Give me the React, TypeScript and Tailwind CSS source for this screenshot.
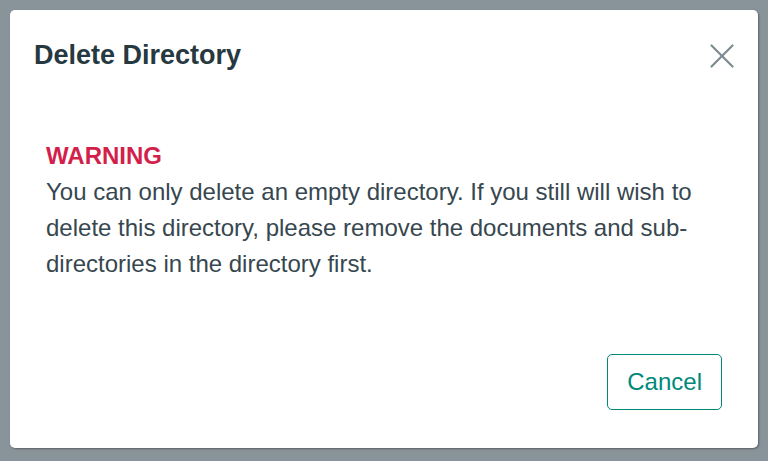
import React from 'react';

const CloseIcon: React.FC = () => (
  <svg width="24" height="24" viewBox="0 0 24 24" fill="none" stroke="#7b8a8f" strokeWidth="2.2" strokeLinecap="round">
    <line x1="1.5" y1="1.5" x2="22.5" y2="22.5" />
    <line x1="22.5" y1="1.5" x2="1.5" y2="22.5" />
  </svg>
);

export default function App() {
  return (
    <div className="h-[461px] w-full bg-[#89949a] p-[10px] font-['Liberation_Sans',Arial,sans-serif]">
      <div className="flex h-[438px] flex-col rounded-[5px] bg-white shadow-[1px_1px_2px_rgba(0,0,0,0.35)]">
        <header className="flex items-center justify-between px-[24px] pt-[30px]">
          <h2 className="text-[27px] font-bold leading-[31px] text-[#263840]">Delete Directory</h2>
          <button type="button" aria-label="Close" className="flex h-6 w-6 items-center justify-center">
            <CloseIcon />
          </button>
        </header>

        <div className="mt-[67px] px-[36px] text-[24px] leading-[36px] text-[#37474f]">
          <p className="font-bold text-[#d31f4b]">WARNING</p>
          <p>
            You can only delete an empty directory. If you still will wish to delete this directory, please remove
            the documents and sub-directories in the directory first.
          </p>
        </div>

        <footer className="mt-auto flex justify-end px-[36px] pb-[38px]">
          <button
            type="button"
            className="rounded-[5px] border border-[#00897b] px-[19px] py-[9px] text-[24px] leading-[36px] text-[#00897b]"
          >
            Cancel
          </button>
        </footer>
      </div>
    </div>
  );
}
